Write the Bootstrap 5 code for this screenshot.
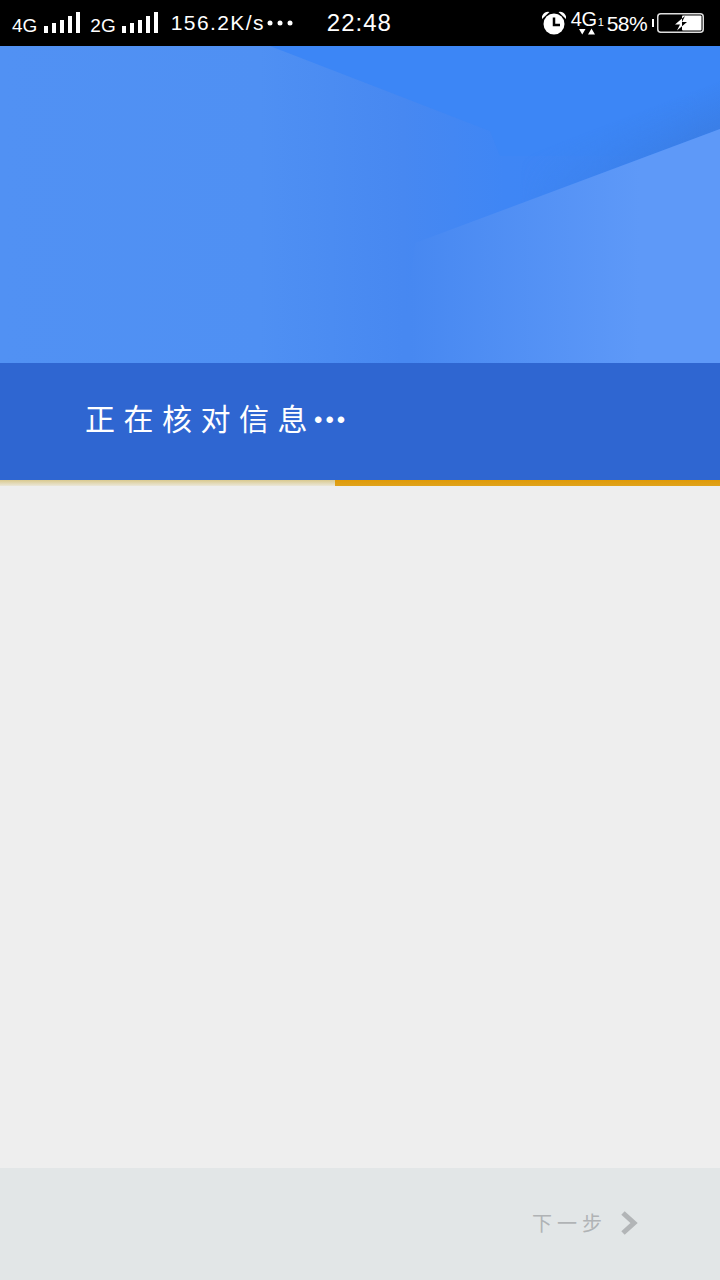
<!DOCTYPE html>
<html lang="zh"><head><meta charset="utf-8">
<link href="https://cdn.jsdelivr.net/npm/bootstrap@5.3.0/dist/css/bootstrap.min.css" rel="stylesheet">
<style>
html,body{height:1280px;width:720px;overflow:hidden;background:#eeeeee}
.shell{width:720px;height:1280px}
.sbar{height:46px;background:#000;color:#fff;font-family:"Liberation Sans",sans-serif;padding:0 16px 0 12px}
.sg{font-size:19px;line-height:1;padding-top:5px}
.sig{margin-left:7px;flex:none}
.sg2{margin-left:10px}
.speed{font-size:21px;line-height:1;letter-spacing:1.4px;margin-left:13px;padding-bottom:2px;white-space:nowrap}
.more{margin-left:2px;flex:none}
.clock{font-size:24px;line-height:1;letter-spacing:1px;margin-left:34px}
.alarm{flex:none;margin-right:-1px}
.net{width:36px;height:36px;margin-left:6px;flex:none}
.net-g{font-size:20px;line-height:1;left:0;top:4px;letter-spacing:-.5px}
.net-n{left:27px;top:12px;font-size:11px;line-height:1}
.net-a{left:8px;top:23px}
.pct{font-size:21px;letter-spacing:-.6px;line-height:1}
.batt{margin-left:5px;flex:none}
.hero{height:317px;overflow:hidden}
.hero svg{display:block}
.band{height:117px;background:#2f66d1;color:#fff;padding-left:85px;padding-bottom:10px;font-family:"Noto Sans CJK SC",sans-serif;font-size:30px;letter-spacing:8.5px;font-weight:400;line-height:1}
.dots{font-family:"Liberation Sans",sans-serif;font-size:24px;letter-spacing:3px;margin-left:-2px;vertical-align:2px}
.prog{height:6px;background:linear-gradient(#d9c98f,#ebe7d8)}
.prog-fill{width:385px;background:linear-gradient(#e09a08,#dfa31c)}
.main-area{height:682px;background:#eeeeee}
.foot{height:112px;background:#e2e6e7;padding-right:82px;padding-bottom:2px;color:#b0b3b5;font-family:"Noto Sans CJK SC",sans-serif;font-size:20px;letter-spacing:5px;font-weight:400;gap:13px}
</style></head><body>
<div class="shell d-flex flex-column">
 <div class="sbar d-flex align-items-center">
  <span class="sg">4G</span>
  <svg class="sig" width="36" height="24" viewBox="0 0 36 24" fill="#fff"><rect x="0" y="15" width="4" height="7"/><rect x="8" y="12" width="4" height="10"/><rect x="16" y="9" width="4" height="13"/><rect x="24" y="5" width="4" height="17"/><rect x="32" y="1" width="4" height="21"/></svg>
  <span class="sg sg2">2G</span>
  <svg class="sig" style="margin-left:6px" width="36" height="24" viewBox="0 0 36 24" fill="#fff"><rect x="0" y="15" width="4" height="7"/><rect x="8" y="12" width="4" height="10"/><rect x="16" y="9" width="4" height="13"/><rect x="24" y="5" width="4" height="17"/><rect x="32" y="1" width="4" height="21"/></svg>
  <span class="speed">156.2K/s</span>
  <svg class="more" width="26" height="6" viewBox="0 0 26 6" fill="#fff"><circle cx="3" cy="3" r="2.500"/><circle cx="13" cy="3" r="2.500"/><circle cx="23" cy="3" r="2.500"/></svg>
  <span class="clock">22:48</span>
  <svg class="alarm ms-auto" width="24" height="24" viewBox="0 0 24 24"><circle cx="12" cy="13" r="10.500" fill="#fff"/><path d="M0 8a6 6 0 0 1 7.500-7zM24 8a6 6 0 0 0-7.500-7z" fill="#fff"/><path d="M12 6.500v7.500h6" stroke="#000" stroke-width="2.500" fill="none"/></svg>
  <span class="net position-relative d-inline-block">
   <span class="net-g position-absolute">4G</span>
   <span class="net-n position-absolute">1</span>
   <svg class="net-a position-absolute" width="16" height="7" viewBox="0 0 16 7" fill="#fff"><path d="M0 1h6.500L3.250 6.500zM9 6.500h7l-3.500-6z"/></svg>
  </span>
  <span class="pct">58%</span>
  <svg class="batt" width="52" height="22" viewBox="0 0 52 22"><defs><clipPath id="bl"><rect x="0" y="0" width="30" height="22"/></clipPath><clipPath id="br"><rect x="30" y="0" width="22" height="22"/></clipPath></defs><rect x="0" y="7" width="2" height="8" fill="#fff"/><rect x="5.750" y="1.750" width="45.500" height="18.500" rx="3" fill="#000" stroke="#ddd" stroke-width="1.500"/><rect x="30" y="3.500" width="19.500" height="15" rx="1" fill="#fff"/><path d="M33 4 23 12.500h5l-3 6 10-8.500h-5l3-6z" fill="#fff" clip-path="url(#bl)"/><path d="M33 4 23 12.500h5l-3 6 10-8.500h-5l3-6z" fill="#000" clip-path="url(#br)"/></svg>
 </div>
 <div class="hero">
  <svg width="720" height="317" viewBox="0 0 720 317">
   <defs>
    <linearGradient id="base" x1="0" x2="720" y1="0" y2="0" gradientUnits="userSpaceOnUse"><stop offset="0" stop-color="#5191f3"/><stop offset=".36" stop-color="#4f90f3"/><stop offset=".56" stop-color="#4788f1"/><stop offset=".7" stop-color="#3f86f5"/><stop offset="1" stop-color="#3c86f6"/></linearGradient>
    <linearGradient id="lite" x1="410" x2="640" y1="0" y2="0" gradientUnits="userSpaceOnUse"><stop offset="0" stop-color="#4788f1"/><stop offset="1" stop-color="#5e99f8"/></linearGradient>
    <linearGradient id="shade" x1="720" y1="83" x2="704" y2="41" gradientUnits="userSpaceOnUse"><stop offset="0" stop-color="#3a7de4" stop-opacity=".85"/><stop offset="1" stop-color="#3a7de4" stop-opacity="0"/></linearGradient>
    <linearGradient id="fadeh" x1="520" x2="700" y1="0" y2="0" gradientUnits="userSpaceOnUse"><stop offset="0" stop-color="#000"/><stop offset="1" stop-color="#fff"/></linearGradient>
    <mask id="fm" maskUnits="userSpaceOnUse" x="0" y="0" width="720" height="317"><rect width="720" height="317" fill="url(#fadeh)"/></mask>
   </defs>
   <rect width="720" height="317" fill="url(#base)"/>
   <path d="M270 0H720V110H500L490 85z" fill="#3c86f6"/>
   <path d="M500 165 720 83V0H500z" fill="url(#shade)" mask="url(#fm)"/>
   <path d="M415 197 720 83V317H400z" fill="url(#lite)"/>
  </svg>
 </div>
 <div class="band d-flex align-items-center"><span>正在核对信息<span class="dots">•••</span></span></div>
 <div class="prog d-flex justify-content-end"><div class="prog-fill"></div></div>
 <div class="main-area flex-grow-1"></div>
 <div class="foot d-flex align-items-center justify-content-end">
  <span>下一步</span>
  <svg width="18" height="24" viewBox="0 0 18 24"><path d="M3 2 14 12 3 22" fill="none" stroke="#b2b5b7" stroke-width="5"/></svg>
 </div>
</div>
<script src="https://cdn.jsdelivr.net/npm/bootstrap@5.3.0/dist/js/bootstrap.bundle.min.js"></script>
</body></html>
